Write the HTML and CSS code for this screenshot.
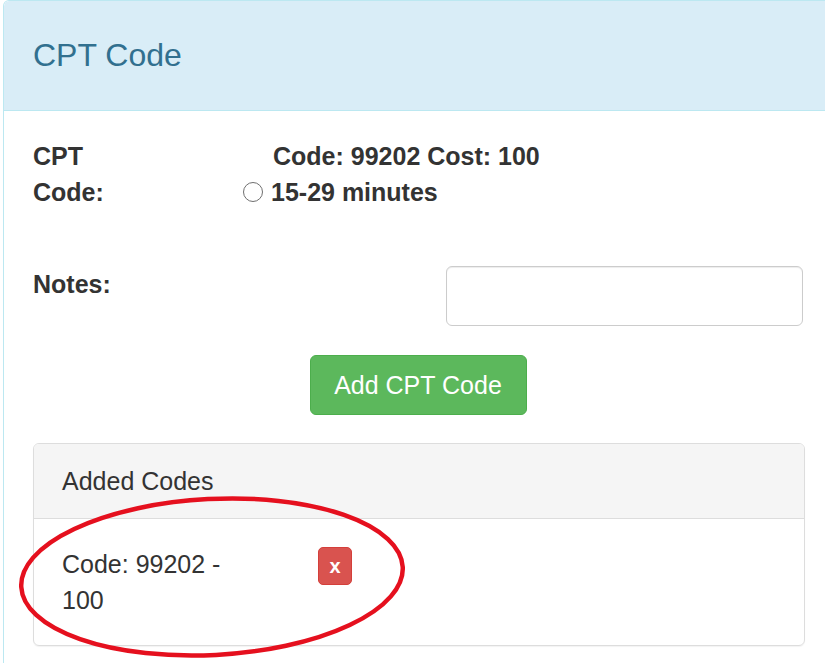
FILE: index.html
```html
<!DOCTYPE html>
<html>
<head>
<meta charset="utf-8">
<link rel="stylesheet" href="styles.css">
</head>
<body>
<div class="panel">
  <div class="panel-heading">CPT Code</div>
  <div class="panel-body">
    <div class="row-code">
      <div class="label">CPT Code:</div>
      <div class="radio-block">
        <div>Code: 99202 Cost: 100</div>
        <div><span class="radio"></span>15-29 minutes</div>
      </div>
    </div>
    <div class="row-notes">
      <div class="label">Notes:</div>
      <div class="input"></div>
    </div>
    <div class="row-btn">
      <button class="btn-add">Add CPT Code</button>
    </div>
    <div class="sub-panel">
      <div class="sub-heading">Added Codes</div>
      <div class="sub-body">
        <div class="code-text">Code: 99202 - 100</div>
        <button class="btn-x">x</button>
      </div>
    </div>
  </div>
</div>
<svg class="annot" width="825" height="663" viewBox="0 0 825 663">
  <ellipse cx="212" cy="577" rx="191" ry="78" transform="rotate(-3 212 577)" fill="none" stroke="#e5101e" stroke-width="4.5"/>
</svg>
</body>
</html>
```
FILE: styles.css
```css
html, body {
  margin: 0;
  padding: 0;
  overflow: hidden;
  width: 825px;
  height: 663px;
  background: #fff;
}
body {
  font-family: "Liberation Sans", Arial, sans-serif;
  font-size: 25px;
  line-height: 36px;
  color: #333;
  position: relative;
}
.panel {
  margin-left: 3px;
  width: 830px;
  height: 663px;
  overflow: hidden;
  border: 1px solid #bce8f1;
  border-bottom: none;
  border-radius: 6px 6px 0 0;
  box-sizing: border-box;
}
.panel-heading {
  background: #d9edf7;
  color: #31708f;
  font-size: 32px;
  line-height: 109px;
  padding: 0 27px 0 29px;
  border-bottom: 1px solid #bce8f1;
  border-radius: 5px 5px 0 0;
}
.panel-body {
  padding: 27px;
}
.row-code {
  display: flex;
}
.label {
  font-weight: bold;
  width: 84px;
  padding-left: 2px;
}
.radio-block {
  margin-left: 120px;
  padding-left: 36px;
  font-weight: bold;
}
.radio {
  display: inline-block;
  width: 18px;
  height: 18px;
  border: 1.6px solid #6f6f6f;
  border-radius: 50%;
  margin-left: -30px;
  margin-right: 8px;
  vertical-align: -1px;
  background: #fff;
}
.row-notes {
  display: flex;
  margin-top: 56px;
}
.input {
  margin-left: 329px;
  width: 357px;
  height: 60px;
  box-sizing: border-box;
  border: 1px solid #ccc;
  border-radius: 6px;
  box-shadow: inset 0 1px 1px rgba(0,0,0,0.075);
}
.row-btn {
  display: flex;
  justify-content: center;
  margin-top: 29px;
}
.btn-add {
  font-family: inherit;
  font-size: 25px;
  color: #fff;
  background: #5cb85c;
  border: 1px solid #4cae4c;
  border-radius: 6px;
  height: 60px;
  width: 217px;
  padding: 0;
  line-height: 58px;
}
.sub-panel {
  margin: 28px 0 0 2px;
  border: 1px solid #ddd;
  border-radius: 6px;
  box-shadow: 0 1px 1px rgba(0,0,0,0.05);
}
.sub-heading {
  background: #f5f5f5;
  border-bottom: 1px solid #ddd;
  border-radius: 5px 5px 0 0;
  padding: 19px 27px 19px 28px;
}
.sub-body {
  padding: 27px 27px 27px 28px;
  display: flex;
  align-items: flex-start;
}
.code-text {
  width: 200px;
}
.btn-x {
  margin-left: 56px;
  margin-top: 1px;
  width: 34px;
  height: 38px;
  padding: 0;
  background: #d9534f;
  border: 1px solid #d43f3a;
  border-radius: 5px;
  color: #fff;
  font-family: inherit;
  font-weight: bold;
  font-size: 20px;
  line-height: 34px;
}
.annot {
  position: absolute;
  left: 0;
  top: 0;
  pointer-events: none;
}
```
